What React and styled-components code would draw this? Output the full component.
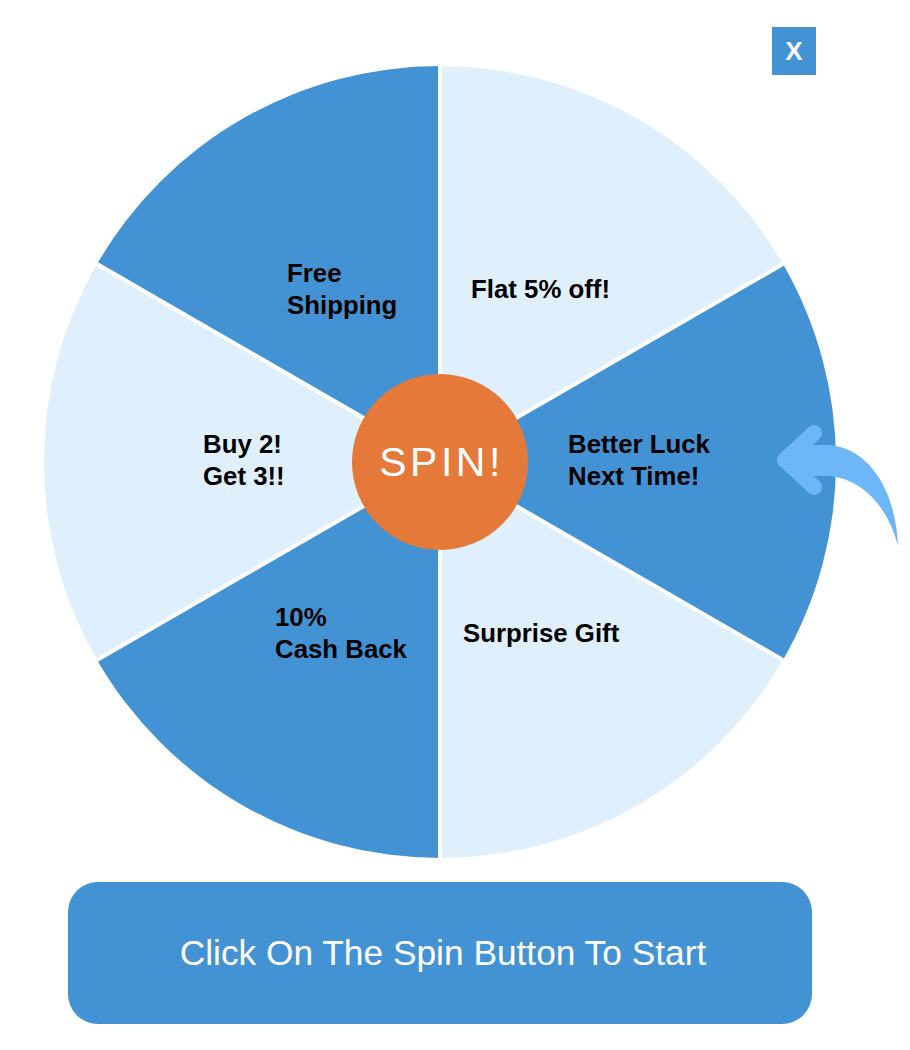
import React from 'react'
import styled, { createGlobalStyle } from 'styled-components'

const GlobalStyle = createGlobalStyle`
  html, body {
    margin: 0;
    padding: 0;
    background: #ffffff;
  }
  body {
    font-family: "Liberation Sans", Arial, Helvetica, sans-serif;
  }
`

const R = 396
const C = 396

const segments = [
  { from: -90, to: -30, fill: '#dff0fc', lines: ['Flat 5% off!'], x: 427, y: 232 },
  { from: -30, to: 30, fill: '#4393d4', lines: ['Better Luck', 'Next Time!'], x: 524, y: 387 },
  { from: 30, to: 90, fill: '#dff0fc', lines: ['Surprise Gift'], x: 419, y: 576 },
  { from: 90, to: 150, fill: '#4393d4', lines: ['10%', 'Cash Back'], x: 231, y: 560 },
  { from: 150, to: 210, fill: '#dff0fc', lines: ['Buy 2!', 'Get 3!!'], x: 159, y: 387 },
  { from: 210, to: 270, fill: '#4393d4', lines: ['Free', 'Shipping'], x: 243, y: 216 },
]

const point = deg => {
  const a = (deg * Math.PI) / 180
  return [C + R * Math.cos(a), C + R * Math.sin(a)]
}

const Page = styled.div`
  position: relative;
  width: 880px;
  padding-top: 66px;
  display: flex;
  flex-direction: column;
  align-items: center;
  gap: 24px;
`

const CloseButton = styled.button`
  position: absolute;
  top: 27px;
  right: 64px;
  width: 44px;
  height: 48px;
  border: none;
  padding: 0;
  background: #4393d4;
  color: #ffffff;
  font-family: "Liberation Sans", Arial, sans-serif;
  font-weight: 700;
  font-size: 26px;
  line-height: 48px;
  cursor: pointer;
`

const WheelBox = styled.div`
  position: relative;
  width: ${R * 2}px;
  height: ${R * 2}px;
`

const WheelSvg = styled.svg`
  display: block;
  width: 100%;
  height: 100%;
`

const Label = styled.text`
  font-family: "Liberation Sans", Arial, sans-serif;
  font-weight: 700;
  font-size: 25.8px;
  fill: #000000;
`

const SpinButton = styled.button`
  position: absolute;
  top: 50%;
  left: 50%;
  width: 176px;
  height: 176px;
  transform: translate(-50%, -50%);
  border: none;
  border-radius: 50%;
  background: #e4793a;
  color: #ffffff;
  font-family: "Liberation Sans", Arial, sans-serif;
  font-size: 41px;
  letter-spacing: 3.5px;
  padding: 0 0 0 3px;
  cursor: pointer;
`

const Pointer = styled.svg`
  position: absolute;
  left: 725px;
  top: 354px;
  overflow: visible;
`

const StartBar = styled.div`
  width: 744px;
  height: 142px;
  border-radius: 30px;
  background: #4393d4;
  color: #ffffff;
  display: flex;
  align-items: center;
  justify-content: center;
  font-size: 35.3px;
  padding-left: 6px;
  box-sizing: border-box;
`

const Wheel = () => (
  <WheelBox>
    <WheelSvg viewBox={`0 0 ${R * 2} ${R * 2}`}>
      {segments.map((s, i) => {
        const [x1, y1] = point(s.from)
        const [x2, y2] = point(s.to)
        return (
          <path
            key={i}
            d={`M${C} ${C} L${x1} ${y1} A${R} ${R} 0 0 1 ${x2} ${y2} Z`}
            fill={s.fill}
          />
        )
      })}
      {segments.map((s, i) => {
        const [x, y] = point(s.from)
        return <line key={i} x1={C} y1={C} x2={x} y2={y} stroke="#ffffff" strokeWidth="4" />
      })}
      {segments.map((s, i) => (
        <Label key={i} x={s.x} y={s.y}>
          {s.lines.map((l, j) => (
            <tspan key={j} x={s.x} dy={j === 0 ? 0 : 32}>{l}</tspan>
          ))}
        </Label>
      ))}
    </WheelSvg>
    <SpinButton>SPIN!</SpinButton>
    <Pointer width="140" height="135" viewBox="0 0 140 135">
      <path
        d="M24 25 L60 25 C101 28 127 72 129 126 C121 95 100 60 60 56 L24 56 Z"
        fill="#6db7f8"
      />
      <path
        d="M45 13 L16 40 L45 67"
        fill="none"
        stroke="#6db7f8"
        strokeWidth="16"
        strokeLinecap="round"
        strokeLinejoin="round"
      />
    </Pointer>
  </WheelBox>
)

const App = () => (
  <>
    <GlobalStyle />
    <Page>
      <CloseButton>X</CloseButton>
      <Wheel />
      <StartBar>Click On The Spin Button To Start</StartBar>
    </Page>
  </>
)

export default App
